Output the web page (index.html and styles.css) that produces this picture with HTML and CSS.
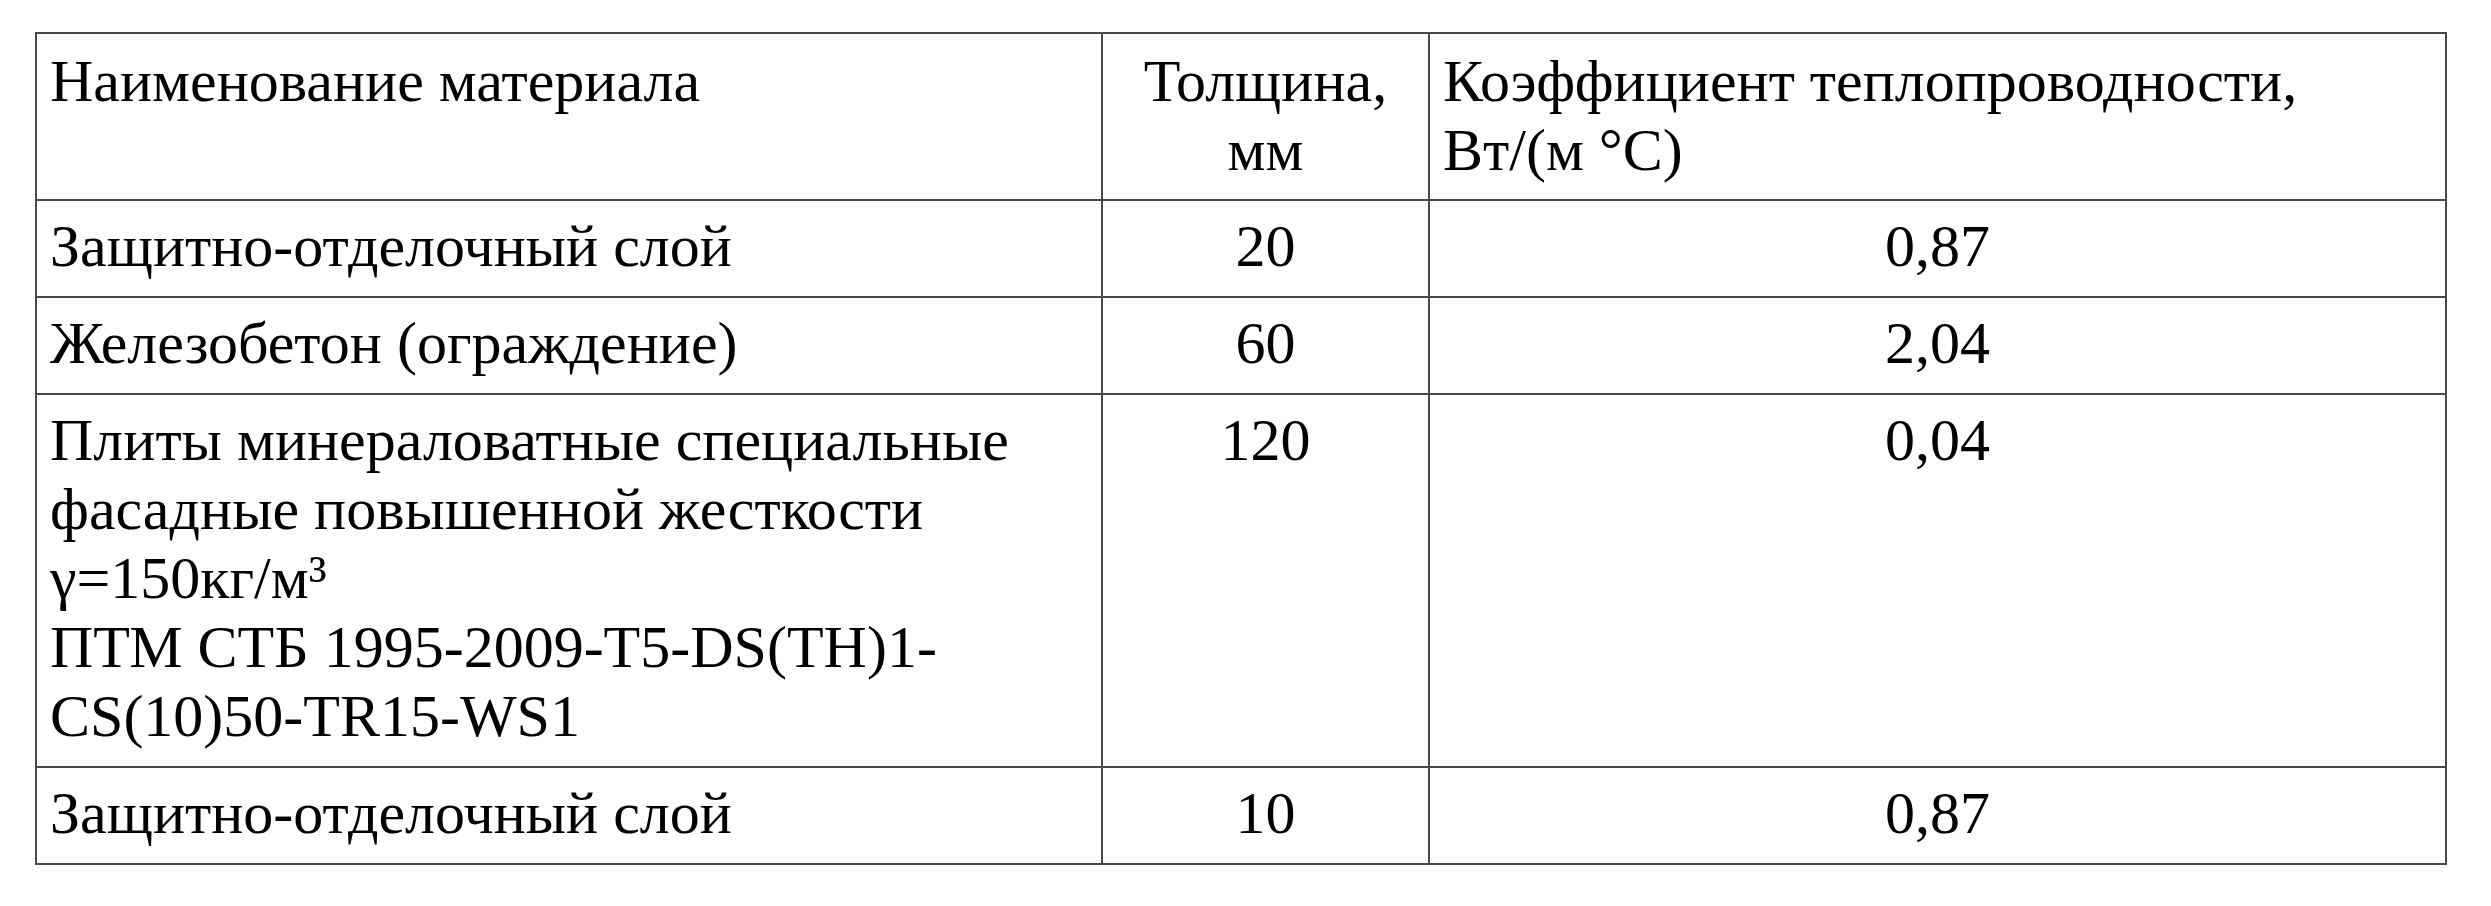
FILE: index.html
```html
<!DOCTYPE html>
<html lang="ru">
<head>
<meta charset="utf-8">
<title>Материалы</title>
<link rel="stylesheet" href="styles.css">
</head>
<body>
<table class="materials">
  <colgroup>
    <col class="col-name">
    <col class="col-thick">
    <col class="col-coef">
  </colgroup>
  <thead>
    <tr>
      <th class="left">Наименование материала</th>
      <th class="center">Толщина,<br>мм</th>
      <th class="left">Коэффициент теплопроводности,<br>Вт/(м °С)</th>
    </tr>
  </thead>
  <tbody>
    <tr>
      <td class="left">Защитно-отделочный слой</td>
      <td class="center">20</td>
      <td class="center">0,87</td>
    </tr>
    <tr>
      <td class="left">Железобетон (ограждение)</td>
      <td class="center">60</td>
      <td class="center">2,04</td>
    </tr>
    <tr>
      <td class="left">Плиты минераловатные специальные фасадные повышенной жесткости<br>γ=150кг/м³<br>ПТМ СТБ 1995-2009-T5-DS(TH)1-CS(10)50-TR15-WS1</td>
      <td class="center">120</td>
      <td class="center">0,04</td>
    </tr>
    <tr>
      <td class="left">Защитно-отделочный слой</td>
      <td class="center">10</td>
      <td class="center">0,87</td>
    </tr>
  </tbody>
</table>
</body>
</html>
```
FILE: styles.css
```css
html, body {
  margin: 0;
  padding: 0;
  background: #ffffff;
}

body {
  font-family: "Liberation Serif", "Times New Roman", serif;
  color: #000000;
}

.materials {
  border-collapse: collapse;
  table-layout: fixed;
  width: 2412px;
  margin: 32px 0 0 35px;
  font-size: 60px;
  line-height: 69px;
}

.col-name { width: 1066px; }
.col-thick { width: 327px; }
.col-coef { width: 1017px; }

.materials th,
.materials td {
  border: 2px solid #4a4a4a;
  padding: 11px 13px 15px 13px;
  vertical-align: top;
  font-weight: normal;
  word-wrap: break-word;
}

.materials th {
  padding-top: 13px;
  padding-bottom: 14px;
}

.left { text-align: left; }
.center { text-align: center; }
```
